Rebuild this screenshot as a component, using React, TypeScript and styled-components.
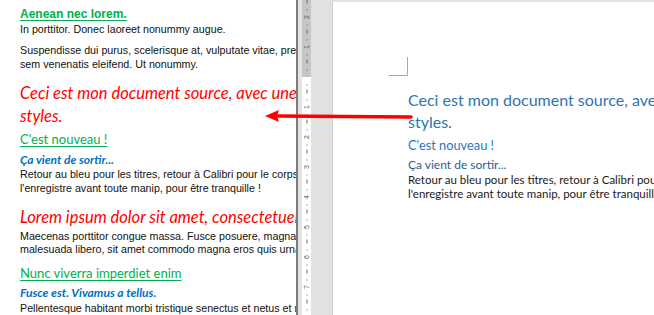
import { createGlobalStyle, styled } from "styled-components";

const GlobalStyle = createGlobalStyle`
  html, body {
    margin: 0;
    padding: 0;
    background: #ffffff;
  }
  body {
    font-family: "Liberation Sans", Arial, sans-serif;
  }
`;

const SIDE = "Lato, 'Open Sans', sans-serif";

export default function App() {
  return (
    <>
      <GlobalStyle />
      <Screen>
        <SourceDoc>
          <GreenTitle $size={12} $bold $font="'Liberation Sans', Arial, sans-serif">
            Aenean nec lorem.
          </GreenTitle>
          <Body $gap={1}>In porttitor. Donec laoreet nonummy augue.</Body>
          <Body $gap={8.25}>
            Suspendisse dui purus, scelerisque at, vulputate vitae, pretium mattis, nunc. Mauris eget neque at
            <br />
            sem venenatis eleifend. Ut nonummy.
          </Body>
          <RedTitle $gap={10.25}>
            Ceci est mon document source, avec une mise en forme de
            <br />
            styles.
          </RedTitle>
          <GreenTitle $size={13} $gap={2.5}>
            C'est nouveau !
          </GreenTitle>
          <BlueTitle $gap={4}>Ça vient de sortir...</BlueTitle>
          <Body>
            Retour au bleu pour les titres, retour à Calibri pour le corps du texte, et on
            <br />
            l'enregistre avant toute manip, pour être tranquille !
          </Body>
          <RedTitle $gap={10.5}>Lorem ipsum dolor sit amet, consectetuer adipiscing elit.</RedTitle>
          <Body $gap={1}>
            Maecenas porttitor congue massa. Fusce posuere, magna sed pulvinar ultricies, purus lectus
            <br />
            malesuada libero, sit amet commodo magna eros quis urna.
          </Body>
          <GreenTitle $size={13} $gap={7.5}>
            Nunc viverra imperdiet enim
          </GreenTitle>
          <BlueTitle $gap={3}>Fusce est. Vivamus a tellus.</BlueTitle>
          <Body $gap={1.25}>
            Pellentesque habitant morbi tristique senectus et netus et malesuada fames ac turpis egestas.
          </Body>
        </SourceDoc>

        <Divider />
        <Gutter />
        <Ruler>
          <RulerMargin />
          {ticks.map((t) => (
            <Tick key={t.y} style={{ top: t.y }} $kind={t.kind}>
              {t.kind === "num" ? t.label : null}
            </Tick>
          ))}
        </Ruler>
        <Workspace>
          <Page>
            <CornerMark />
            <TargetHeading>
              Ceci est mon document source, avec une mise en forme de
              <br />
              styles.
            </TargetHeading>
            <TargetSub>C'est nouveau !</TargetSub>
            <TargetSub3>Ça vient de sortir...</TargetSub3>
            <TargetBody>
              Retour au bleu pour les titres, retour à Calibri pour le corps du texte
              <br />
              l'enregistre avant toute manip, pour être tranquille !
            </TargetBody>
          </Page>
        </Workspace>

        <Arrow width="150" height="20" viewBox="0 0 150 20">
          <line x1="12" y1="9" x2="146" y2="10" stroke="#ff0000" strokeWidth="3.5" strokeLinecap="round" />
          <polygon points="0,9 14,3 12,9 14,15" fill="#ff0000" />
        </Arrow>
      </Screen>
    </>
  );
}

// vertical ruler ticks: zero at y=77, 30px per unit
const ticks = (() => {
  const out: { y: number; kind: "num" | "dot" | "dash"; label?: string }[] = [];
  for (let i = -3; i <= 8; i++) {
    const base = 77 + i * 30;
    if (i !== 0) out.push({ y: base, kind: "num", label: String(Math.abs(i)) });
    out.push({ y: base + 7.5, kind: "dot" });
    out.push({ y: base + 15, kind: "dash" });
    out.push({ y: base + 22.5, kind: "dot" });
  }
  return out.filter((t) => t.y > -5 && t.y < 320);
})();

const Screen = styled.div`
  position: relative;
  display: flex;
  width: 654px;
  height: 315px;
  overflow: hidden;
  background: #ffffff;
`;

const SourceDoc = styled.div`
  width: 276px;
  flex-shrink: 0;
  padding: 6.5px 0 0 20px;
  overflow: hidden;
  white-space: nowrap;
`;

const GreenTitle = styled.div<{ $size: number; $bold?: boolean; $gap?: number; $font?: string }>`
  margin-top: ${(p) => p.$gap ?? 0}px;
  font-family: ${(p) => p.$font ?? SIDE};
  font-size: ${(p) => p.$size}px;
  font-weight: ${(p) => (p.$bold ? 700 : 400)};
  line-height: ${(p) => (p.$bold ? 15 : 18)}px;
  color: #00b050;
  text-decoration: underline;
  text-underline-offset: 2px;
`;

const Body = styled.div<{ $gap?: number }>`
  margin-top: ${(p) => p.$gap ?? 0}px;
  font-family: "Liberation Sans", Arial, sans-serif;
  font-size: 10.7px;
  line-height: 13.5px;
  color: #111111;
`;

const RedTitle = styled.div<{ $gap?: number }>`
  margin-top: ${(p) => p.$gap ?? 0}px;
  font-family: ${SIDE};
  font-style: italic;
  font-size: 16.5px;
  line-height: 23px;
  color: #ff0000;
`;

const BlueTitle = styled.div<{ $gap?: number }>`
  margin-top: ${(p) => p.$gap ?? 0}px;
  font-family: ${SIDE};
  font-style: italic;
  font-weight: 700;
  font-size: 12px;
  line-height: 16px;
  color: #0070c0;
`;

const Divider = styled.div`
  width: 2px;
  flex-shrink: 0;
  background: #7b7b7b;
`;

const Gutter = styled.div`
  width: 4px;
  flex-shrink: 0;
  background: #e3e3e3;
`;

const Ruler = styled.div`
  position: relative;
  width: 9px;
  flex-shrink: 0;
  background: #ffffff;
  overflow: hidden;
`;

const RulerMargin = styled.div`
  height: 77px;
  background: #c6c6c6;
`;

const Tick = styled.div<{ $kind: "num" | "dot" | "dash" }>`
  position: absolute;
  left: 0;
  width: 9px;
  height: 8px;
  margin-top: -4px;
  display: flex;
  align-items: center;
  justify-content: center;
  font-family: "Liberation Sans", Arial, sans-serif;
  font-size: 7px;
  line-height: 8px;
  color: #555555;
  transform: rotate(-90deg);

  &::before {
    content: "";
    display: ${(p) => (p.$kind === "num" ? "none" : "block")};
    width: ${(p) => (p.$kind === "dash" ? 4 : 1)}px;
    height: 1px;
    background: #6a6a6a;
  }
`;

const Workspace = styled.div`
  flex: 1;
  display: flex;
  padding: 2px 0 0 22px;
  background: #e1e1e1;
`;

const Page = styled.div`
  flex: 1;
  background: #ffffff;
  padding: 55px 0 0 75px;
  white-space: nowrap;
  overflow: hidden;
  box-shadow: -1px 0 0 #d0d0d0;
`;

const CornerMark = styled.div`
  width: 18px;
  height: 18px;
  margin-left: -19px;
  border-right: 1px solid #a9a9a9;
  border-bottom: 1px solid #a9a9a9;
`;

const TargetHeading = styled.div`
  margin-top: 13px;
  font-family: ${SIDE};
  font-size: 16px;
  line-height: 22px;
  color: #2e74b5;
`;

const TargetSub = styled.div`
  margin-top: 2px;
  font-family: ${SIDE};
  font-size: 12.8px;
  line-height: 20px;
  color: #2e74b5;
`;

const TargetSub3 = styled.div`
  margin-top: 2px;
  font-family: ${SIDE};
  font-size: 12px;
  line-height: 16px;
  color: #2a5d8f;
`;

const TargetBody = styled.div`
  font-family: ${SIDE};
  font-size: 11.5px;
  line-height: 14px;
  color: #1a1a1a;
`;

const Arrow = styled.svg`
  position: absolute;
  left: 265px;
  top: 107px;
  overflow: visible;
`;
